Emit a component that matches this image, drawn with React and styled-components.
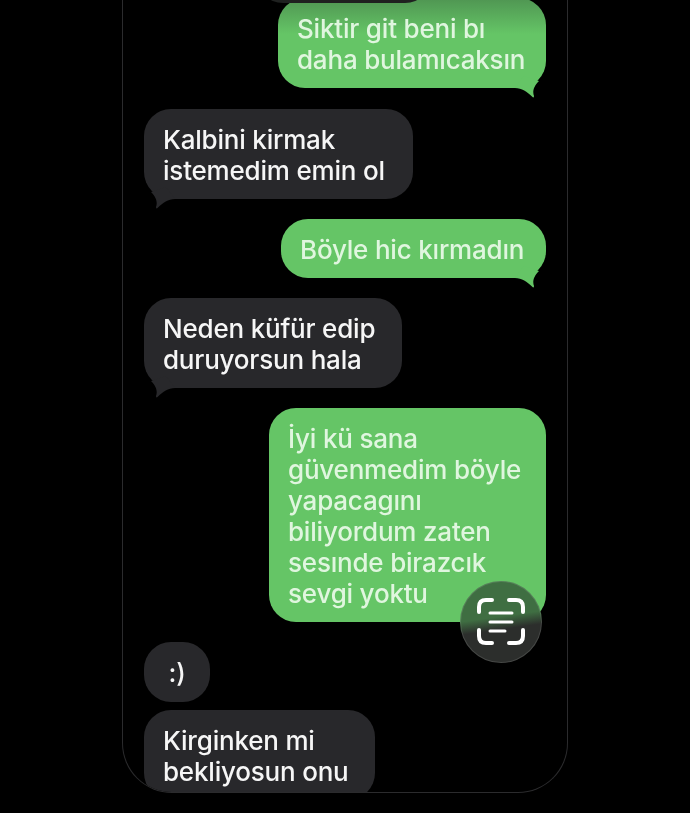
import React from 'react'
import styled, { createGlobalStyle } from 'styled-components'

const GlobalStyle = createGlobalStyle`
  html, body {
    margin: 0;
    padding: 0;
    background: #000;
  }
`

const Phone = styled.div`
  box-sizing: border-box;
  width: 446px;
  height: 793px;
  margin-left: 122px;
  border: 1px solid #2b2b2d;
  border-top: none;
  border-radius: 0 0 50px 50px;
  overflow: hidden;
  position: relative;
  background: #000;
`

const Thread = styled.div`
  display: flex;
  flex-direction: column;
  padding: 0 21px 0 21px;
  margin-top: -56px;
  font-family: Inter, "Liberation Sans", sans-serif;
  font-size: 26px;
  font-weight: 500;
  letter-spacing: -0.2px;
  line-height: 31px;
  filter: blur(0.5px);
`

const Bubble = styled.div`
  position: relative;
  box-sizing: border-box;
  flex-shrink: 0;
  width: ${p => p.$width}px;
  margin-top: ${p => p.$gap}px;
  padding: 15px 19px 13px;
  border-radius: 27px;
  align-self: ${p => (p.$mine ? 'flex-end' : 'flex-start')};
  background: ${p => (p.$mine ? '#65c566' : '#28282b')};
  color: ${p => (p.$mine ? '#e0f6df' : '#f6f6f6')};
  white-space: nowrap;
`

const PeekBubble = styled(Bubble)`
  margin-left: 112px;
  z-index: 1;
  background: #1f2120;
`

const TopBubble = styled(Bubble)`
  background: linear-gradient(#4f9552 0%, #65c566 40%);
`

const Emoticon = styled(Bubble)`
  padding: 15px 0 14px;
  text-align: center;
`

const TailSvg = styled.svg`
  position: absolute;
  bottom: -10px;
  ${p => (p.$mine ? 'right: 0;' : 'left: 0; transform: scaleX(-1);')}
`

const ScanButton = styled.div`
  position: absolute;
  left: 337px;
  top: 581px;
  width: 82px;
  height: 82px;
  border-radius: 50%;
  display: flex;
  align-items: center;
  justify-content: center;
  background: linear-gradient(172deg, #3f6e42 44%, #2c2e2c 58%);
  box-shadow: inset 0 0 0 1px rgba(255, 255, 255, 0.12);
`

function Tail({ mine }) {
  return (
    <TailSvg $mine={mine} width="32" height="22" viewBox="0 0 32 22">
      <path
        d="M1 12 C8 12 13 16 18 20.5 Q20 22.5 20 20 C18.5 16 19 11 25 5 L10 0 Z"
        fill={mine ? '#65c566' : '#28282b'}
      />
    </TailSvg>
  )
}

function ScanIcon() {
  return (
    <svg width="48" height="48" viewBox="0 0 48 48" fill="none" stroke="#fff" strokeWidth="4" strokeLinecap="round">
      <path d="M15 2 H9 Q2 2 2 9 V14" />
      <path d="M32 2 H39 Q46 2 46 9 V14" />
      <path d="M2 32 V38 Q2 45 9 45 H15" />
      <path d="M46 32 V38 Q46 45 39 45 H32" />
      <path d="M13 15 H35" strokeWidth="3" />
      <path d="M13 24 H35" strokeWidth="3" />
      <path d="M13 33 H28" strokeWidth="3" />
    </svg>
  )
}

const messages = [
  { id: 'a', width: 269, gap: 21, lines: ['Kalbini kirmak', 'istemedim emin ol'], tail: true },
  { id: 'b', mine: true, width: 265, gap: 20, lines: ['Böyle hic kırmadın'], tail: true },
  { id: 'c', width: 258, gap: 20, lines: ['Neden küfür edip', 'duruyorsun hala'], tail: true },
  {
    id: 'd',
    mine: true,
    width: 277,
    gap: 20,
    lines: ['İyi kü sana', 'güvenmedim böyle', 'yapacagını', 'biliyordum zaten', 'sesınde birazcık', 'sevgi yoktu'],
  },
]

export default function App() {
  return (
    <Phone>
      <GlobalStyle />
      <Thread>
        <PeekBubble $width={176} $gap={0}>&nbsp;</PeekBubble>
        <TopBubble $mine $width={268} $gap={-5}>
          Siktir git beni bı
          <br />
          daha bulamıcaksın
          <Tail mine />
        </TopBubble>
        {messages.map(m => (
          <Bubble key={m.id} $mine={m.mine} $width={m.width} $gap={m.gap}>
            {m.lines.map((line, i) => (
              <div key={i}>{line}</div>
            ))}
            {m.tail && <Tail mine={m.mine} />}
          </Bubble>
        ))}
        <Emoticon $width={66} $gap={20}>:)</Emoticon>
        <Bubble $width={231} $gap={8}>
          Kirginken mi
          <br />
          bekliyosun onu
        </Bubble>
      </Thread>
      <ScanButton>
        <ScanIcon />
      </ScanButton>
    </Phone>
  )
}
